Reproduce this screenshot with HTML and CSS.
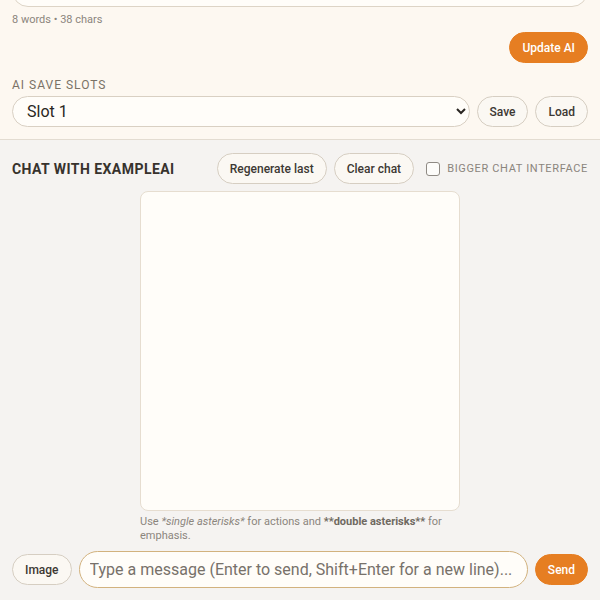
FILE: index.html
```html
<!DOCTYPE html>
<html lang="en">
<head>
<meta charset="utf-8">
<title>Chat with ExampleAI</title>
<link rel="stylesheet" href="styles.css">
</head>
<body>
<section class="settings">
  <div class="prompt-box"></div>
  <div class="counter">8 words • 38 chars</div>
  <div class="update-row">
    <button class="btn btn-primary">Update AI</button>
  </div>
  <div class="section-label">AI SAVE SLOTS</div>
  <div class="slot-row">
    <select class="slot-select">
      <option>Slot 1</option>
    </select>
    <button class="btn">Save</button>
    <button class="btn">Load</button>
  </div>
</section>
<section class="chat">
  <div class="chat-header">
    <h2 class="chat-title">CHAT WITH EXAMPLEAI</h2>
    <div class="chat-actions">
      <button class="btn">Regenerate last</button>
      <button class="btn">Clear chat</button>
      <label class="bigger"><input type="checkbox" class="bigger-check"><span>BIGGER CHAT INTERFACE</span></label>
    </div>
  </div>
  <div class="chat-log"></div>
  <p class="hint">Use <em>*single asterisks*</em> for actions and <strong>**double asterisks**</strong> for emphasis.</p>
  <div class="composer">
    <button class="btn">Image</button>
    <input class="message" type="text" placeholder="Type a message (Enter to send, Shift+Enter for a new line)...">
    <button class="btn btn-primary">Send</button>
  </div>
</section>
</body>
</html>
```
FILE: styles.css
```css
* { box-sizing: border-box; }
html, body { margin: 0; padding: 0; }
body {
  font-family: Roboto, "Liberation Sans", sans-serif;
  color: #2e2a26;
  background: #f5f3f1;
  width: 600px;
  height: 600px;
  overflow: hidden;
}
.settings {
  background: #fdf8f1;
  padding: 0 12px 12px;
  border-bottom: 1px solid #e3dcd1;
}
.prompt-box {
  height: 60px;
  margin-top: -53px;
  border: 1px solid #ddd4c6;
  border-radius: 16px;
  background: #fffdf9;
}
.counter {
  font-size: 11px;
  line-height: 14px;
  color: #8b857d;
  margin-top: 6px;
}
.update-row {
  display: flex;
  justify-content: flex-end;
  margin-top: 5px;
}
.btn {
  font-family: Roboto, "Liberation Sans", sans-serif;
  font-size: 12px;
  font-weight: 500;
  color: #3d3833;
  height: 31px;
  padding: 0 12px;
  border: 1px solid #d6cec2;
  border-radius: 16px;
  background: #fbf8f3;
  cursor: pointer;
  flex: none;
}
.btn-primary {
  background: #e67e22;
  border-color: #e67e22;
  color: #fff;
}
.section-label {
  font-size: 12px;
  line-height: 14px;
  letter-spacing: 1px;
  color: #7a7266;
  margin-top: 15px;
}
.slot-row {
  display: flex;
  gap: 7px;
  margin-top: 4px;
}
.slot-select {
  flex: 1;
  height: 31px;
  font-family: Roboto, "Liberation Sans", sans-serif;
  font-size: 16px;
  color: #2a2622;
  padding: 0 6px 0 10px;
  border: 1px solid #d9d0c3;
  border-radius: 16px;
  background: #fffdf9;
}
.chat {
  padding: 13px 12px 12px;
}
.chat-header {
  display: flex;
  justify-content: space-between;
  align-items: center;
}
.chat-title {
  margin: 0;
  font-size: 14px;
  font-weight: 700;
  letter-spacing: 0.45px;
  color: #37322d;
}
.chat-actions {
  display: flex;
  align-items: center;
  gap: 7px;
}
.bigger {
  display: flex;
  align-items: center;
  gap: 7px;
  margin-left: 5px;
  font-size: 11px;
  letter-spacing: 0.65px;
  color: #8b857d;
}
.bigger-check {
  width: 14px;
  height: 14px;
  margin: 0;
  appearance: none;
  border: 1px solid #8f8a84;
  border-radius: 3px;
  background: #fdfcfa;
}
.chat-log {
  width: 320px;
  height: 320px;
  margin: 7px auto 0;
  background: #fffdf9;
  border: 1px solid #e6ddd0;
  border-radius: 8px;
}
.hint {
  width: 320px;
  margin: 4px auto 0;
  font-size: 11px;
  line-height: 14px;
  color: #8b857d;
}
.hint strong { font-weight: 700; color: #6f6961; }
.composer {
  display: flex;
  align-items: center;
  gap: 7px;
  margin-top: 8px;
}
.message {
  flex: 1;
  min-width: 0;
  height: 37px;
  padding: 0 10px;
  font-family: Roboto, "Liberation Sans", sans-serif;
  font-size: 16px;
  color: #2e2a26;
  border: 1px solid #d2b27e;
  border-radius: 19px;
  background: #fffdf9;
}
.message::placeholder { color: #77716a; }
```
